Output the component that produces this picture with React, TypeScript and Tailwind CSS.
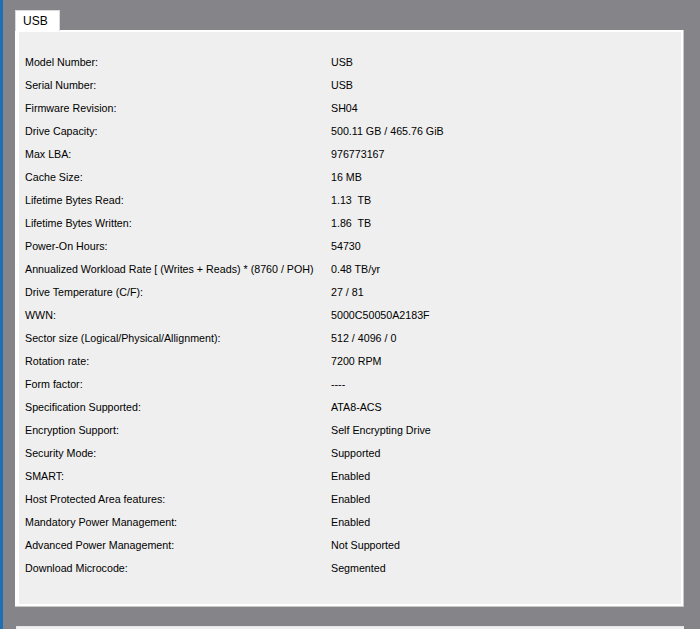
const rows: [string, string][] = [
  ["Model Number:", "USB"],
  ["Serial Number:", "USB"],
  ["Firmware Revision:", "SH04"],
  ["Drive Capacity:", "500.11 GB / 465.76 GiB"],
  ["Max LBA:", "976773167"],
  ["Cache Size:", "16 MB"],
  ["Lifetime Bytes Read:", "1.13  TB"],
  ["Lifetime Bytes Written:", "1.86  TB"],
  ["Power-On Hours:", "54730"],
  ["Annualized Workload Rate [ (Writes + Reads) * (8760 / POH)", "0.48 TB/yr"],
  ["Drive Temperature (C/F):", "27 / 81"],
  ["WWN:", "5000C50050A2183F"],
  ["Sector size (Logical/Physical/Allignment):", "512 / 4096 / 0"],
  ["Rotation rate:", "7200 RPM"],
  ["Form factor:", "----"],
  ["Specification Supported:", "ATA8-ACS"],
  ["Encryption Support:", "Self Encrypting Drive"],
  ["Security Mode:", "Supported"],
  ["SMART:", "Enabled"],
  ["Host Protected Area features:", "Enabled"],
  ["Mandatory Power Management:", "Enabled"],
  ["Advanced Power Management:", "Not Supported"],
  ["Download Microcode:", "Segmented"],
];

export default function App() {
  return (
    <div
      className="flex h-[629px] w-[700px] overflow-hidden bg-[#858488] text-[10.7px] text-black"
      style={{ fontFamily: '"Liberation Sans", Arial, sans-serif' }}
    >
      {/* window edge on the left */}
      <div className="w-[3px] shrink-0 bg-[#1f6fb4]" />

      <div className="flex flex-1 flex-col pl-[12px] pt-[10px]">
        {/* tab header */}
        <div className="flex">
          <div className="relative z-10 -mb-px flex h-[21px] w-[45px] items-center border border-b-0 border-[#d9d9d9] bg-white pl-[7px] text-[12px]">
            USB
          </div>
        </div>

        {/* tab page */}
        <div className="w-[669px] border-r border-b border-[#c8c8c8] bg-white pt-[2px] pr-[2px] pb-[2px] pl-[4px]">
          <div className="flex h-[572px] flex-col bg-[#efefef] pt-[19px] pl-[6px]">
            {rows.map(([label, value]) => (
              <div key={label} className="flex h-[23px] items-center">
                <span className="w-[306px] shrink-0 whitespace-pre">{label}</span>
                <span className="whitespace-pre">{value}</span>
              </div>
            ))}
          </div>
        </div>

        {/* next control below */}
        <div className="mt-[19px] ml-px h-[10px] w-[668px] border-t border-l border-[#e6e6e6] bg-[#f0f0f0]" />
      </div>
    </div>
  );
}
